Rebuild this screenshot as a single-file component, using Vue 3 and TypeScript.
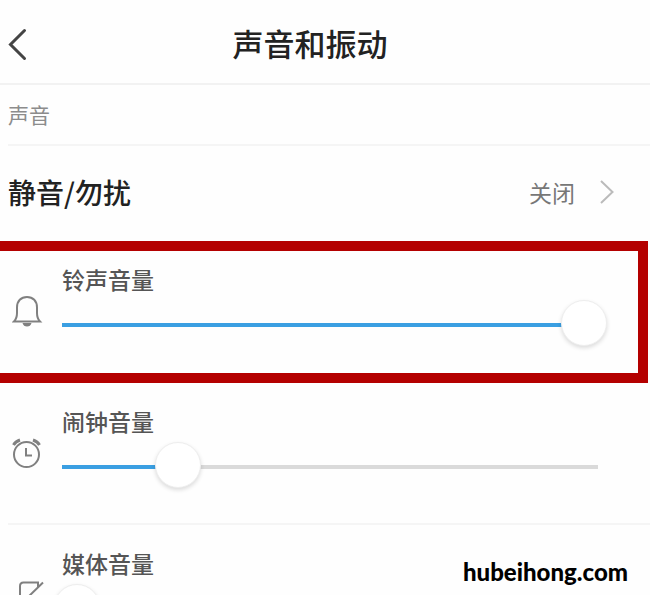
<script setup lang="ts">
import { reactive } from 'vue'

interface Volume {
  id: string
  label: string
  icon: 'bell' | 'clock' | 'media'
  value: number
  highlighted: boolean
}

const volumes = reactive<Volume[]>([
  { id: 'ring', label: '铃声音量', icon: 'bell', value: 100, highlighted: true },
  { id: 'alarm', label: '闹钟音量', icon: 'clock', value: 20, highlighted: false },
  { id: 'media', label: '媒体音量', icon: 'media', value: 0, highlighted: false },
])
</script>

<template>
  <main class="page">
    <header class="header">
      <button class="back" type="button" aria-label="返回">
        <svg width="20" height="34" viewBox="0 0 20 34" aria-hidden="true">
          <path d="M16.500 3.500 2.500 17.500 16.500 31.500" />
        </svg>
      </button>
      <h1 class="title">声音和振动</h1>
    </header>

    <h2 class="section">声音</h2>

    <button class="mute" type="button">
      <span class="mute-name">静音/勿扰</span>
      <span class="mute-state">关闭</span>
      <svg class="chevron" width="16" height="26" viewBox="0 0 16 26" aria-hidden="true">
        <path d="M2 2 13.500 13 2 24" />
      </svg>
    </button>

    <section
      v-for="item in volumes"
      :key="item.id"
      class="volume"
      :class="{ highlighted: item.highlighted }"
    >
      <svg class="icon" width="32" height="34" viewBox="0 0 32 34" aria-hidden="true">
        <g v-if="item.icon === 'bell'">
          <path d="M2 27.500C4.500 25 5 22.500 5 19V13.500C5 7 9 3 15 3S25 7 25 13.500V19C25 22.500 25.500 25 28 27.500Z" />
          <path class="solid" d="M10.500 29H19.500Q18.500 32.500 15 32.500T10.500 29Z" />
        </g>
        <g v-else-if="item.icon === 'clock'">
          <circle cx="14.500" cy="18.500" r="12.500" />
          <path d="M14 12V19.500H20" />
          <path class="thick" d="M1.500 9Q3.500 5.500 8 4M21 4Q25.500 5.500 27.500 9" />
        </g>
        <g v-else>
          <path d="M8 34V8Q8 4.500 11.500 4.500H26V9M31 4.500 13 22M8 25V29" />
        </g>
      </svg>
      <div class="control">
        <label class="volume-name" :for="item.id">{{ item.label }}</label>
        <input
          :id="item.id"
          v-model.number="item.value"
          class="slider"
          type="range"
          min="0"
          max="100"
          :style="{ '--level': item.value / 100 }"
        />
      </div>
    </section>

    <div class="watermark">hubeihong.com</div>
  </main>
</template>

<style>
body {
  background: #fefefe;
}
</style>

<style scoped>
.page {
  position: relative;
  box-sizing: border-box;
  height: 100vh;
  overflow: hidden;
  background: #fefefe;
  color: #222;
  font-family: "Liberation Sans", "Noto Sans CJK SC", sans-serif;
}

.page * {
  box-sizing: border-box;
}

button {
  border: 0;
  padding: 0;
  background: none;
  color: inherit;
  font: inherit;
  cursor: pointer;
}

svg {
  display: block;
  fill: none;
}

.header {
  display: grid;
  grid-template-columns: 40px 1fr 78px;
  align-items: center;
  height: 85px;
  padding: 4px 0 0 8px;
  border-bottom: 2px solid #f2f2f2;
}

.back svg {
  stroke: #444;
  stroke-width: 3;
  stroke-linecap: round;
}

.title {
  margin: 0;
  padding-top: 4px;
  text-align: center;
  font-size: 31px;
  font-weight: 500;
  line-height: 40px;
}

.section {
  margin: 0 0 0 8px;
  padding: 17px 0 14px;
  border-bottom: 2px solid #f5f5f5;
  color: #8c8c8c;
  font-size: 21px;
  font-weight: 400;
  line-height: 28px;
}

.mute {
  display: flex;
  align-items: center;
  width: 100%;
  height: 95px;
  padding: 0 35px 4px 8px;
  text-align: left;
}

.mute-name {
  flex: 1;
  font-family: "Noto Sans CJK SC", sans-serif;
  font-size: 28px;
  font-weight: 500;
}

.mute-state {
  color: #777;
  font-size: 23px;
}

.chevron {
  margin-left: 24px;
  stroke: #bbb;
  stroke-width: 2;
}

.volume {
  display: flex;
  height: 142px;
  margin-left: 8px;
  padding: 24px 43px 0 4px;
  border-bottom: 2px solid #f5f5f5;
}

.highlighted {
  margin: 0 2px 0 0;
  padding: 14px 31px 0 12px;
  border: 10px solid #b40000;
  border-left: 0;
}

.icon {
  flex: none;
  margin-top: 29px;
  stroke: #808080;
  stroke-width: 2;
}

.icon .solid {
  fill: #808080;
  stroke: none;
}

.icon .thick {
  stroke-width: 3;
}

.control {
  flex: 1;
  margin-left: 10px;
}

.volume-name {
  display: block;
  padding-left: 8px;
  color: #555;
  font-size: 23px;
  font-weight: 500;
  line-height: 32px;
}

.slider {
  display: block;
  width: 100%;
  height: 46px;
  margin: 3px 0 0;
  appearance: none;
  background:
    linear-gradient(#3a9fe2, #3a9fe2) 8px 23px / calc((100% - 46px) * var(--level) + 15px) 4px no-repeat,
    linear-gradient(#dadada, #dadada) 8px 23px / calc(100% - 17px) 4px no-repeat;
  cursor: pointer;
}

.slider::-webkit-slider-thumb {
  appearance: none;
  width: 46px;
  height: 46px;
  border: 1px solid #eee;
  border-radius: 50%;
  background: #fff;
  box-shadow: 0 2px 4px rgba(0, 0, 0, 0.14);
}

.watermark {
  position: absolute;
  right: 22px;
  bottom: 8px;
  color: #000;
  font-family: Lato, sans-serif;
  font-size: 24px;
  font-weight: 900;
  line-height: 30px;
}
</style>
